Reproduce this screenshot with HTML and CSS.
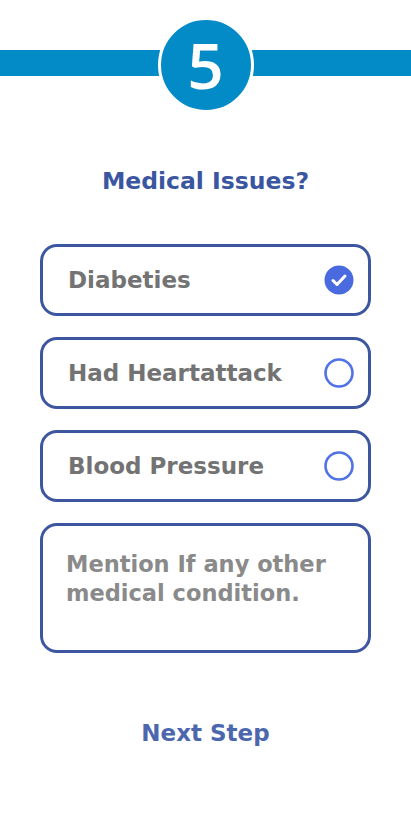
FILE: index.html
```html
<!DOCTYPE html>
<html>
<head>
<meta charset="utf-8">
<link rel="stylesheet" href="styles.css">
</head>
<body>
<div class="page">
  <div class="stepper">
    <div class="bar"></div>
    <div class="step">5</div>
  </div>
  <h1 class="title">Medical Issues?</h1>
  <div class="options">
    <div class="option">
      <span class="label">Diabeties</span>
      <svg class="check" width="30" height="30" viewBox="0 0 30 30"><circle cx="15" cy="15" r="14.5" fill="#4a6be0"/><path d="M9 15.5l4 4 8-8.5" fill="none" stroke="#fff" stroke-width="3" stroke-linecap="round" stroke-linejoin="round"/></svg>
    </div>
    <div class="option">
      <span class="label">Had Heartattack</span>
      <svg class="check" width="30" height="30" viewBox="0 0 30 30"><circle cx="15" cy="15" r="13.5" fill="none" stroke="#4f72e6" stroke-width="2.6"/></svg>
    </div>
    <div class="option">
      <span class="label">Blood Pressure</span>
      <svg class="check" width="30" height="30" viewBox="0 0 30 30"><circle cx="15" cy="15" r="13.5" fill="none" stroke="#4f72e6" stroke-width="2.6"/></svg>
    </div>
    <div class="note">Mention If any other medical condition.</div>
  </div>
  <div class="next">Next Step</div>
</div>
</body>
</html>
```
FILE: styles.css
```css
html, body {
  margin: 0;
  padding: 0;
  background: #fff;
}
body {
  font-family: "DejaVu Sans", "Open Sans", sans-serif;
  font-weight: bold;
}
.page {
  width: 411px;
  display: flex;
  flex-direction: column;
  align-items: center;
}
.stepper {
  position: relative;
  width: 411px;
  height: 110px;
  display: flex;
  justify-content: center;
  padding-top: 17px;
  box-sizing: border-box;
}
.bar {
  position: absolute;
  left: 0;
  right: 0;
  top: 50px;
  height: 26px;
  background: #038bc8;
}
.step {
  position: relative;
  width: 90px;
  height: 90px;
  border-radius: 50%;
  background: #038bc8;
  border: 3px solid #fff;
  color: #fff;
  font-family: "Open Sans", sans-serif;
  font-weight: 600;
  font-size: 64px;
  line-height: 90px;
  text-align: center;
}
.title {
  margin: 57px 0 0;
  font-size: 23.5px;
  line-height: 28px;
  color: #3b56a0;
  font-weight: bold;
}
.options {
  margin-top: 49px;
  display: flex;
  flex-direction: column;
  gap: 21px;
  width: 331px;
}
.option {
  height: 72px;
  box-sizing: border-box;
  border: 3px solid #3d56a0;
  border-radius: 17px;
  display: flex;
  align-items: center;
  justify-content: space-between;
  padding: 0 14px 0 25px;
}
.label {
  font-size: 23px;
  color: #737373;
}
.check {
  display: block;
}
.note {
  height: 130px;
  box-sizing: border-box;
  border: 3px solid #3d56a0;
  border-radius: 17px;
  padding: 24px 12px 0 23px;
  font-size: 22.5px;
  line-height: 29px;
  color: #8a8a8a;
}
.next {
  margin-top: 67px;
  font-size: 23px;
  color: #4d67ae;
}
```
